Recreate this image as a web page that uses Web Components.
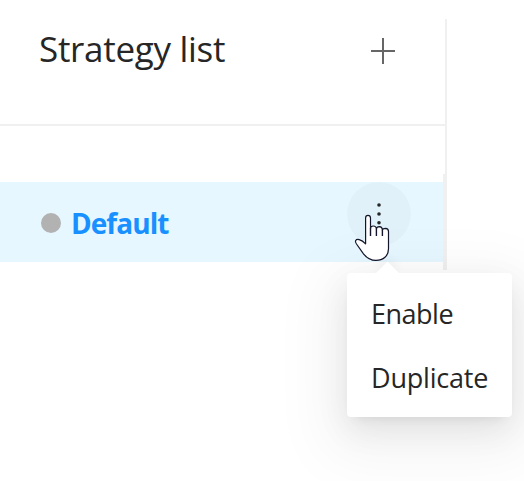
<!DOCTYPE html>
<html lang="en">
<head>
<meta charset="utf-8">
<title>Strategy list</title>
<style>
body{margin:0;width:524px;height:481px;overflow:hidden;background:#fff;color:#262626;font-family:"Open Sans","Noto Sans",sans-serif;font-weight:370}
</style>
</head>
<body>
<strategy-panel>
  <panel-header slot="header">Strategy list</panel-header>
  <strategy-row>Default
    <action-menu slot="menu">
      <menu-item style="--ls:-.5px">Enable</menu-item>
      <menu-item>Duplicate</menu-item>
    </action-menu>
  </strategy-row>
</strategy-panel>
<script>
const define = (name, html) => customElements.define(name, class extends HTMLElement {
  constructor() {
    super();
    this.attachShadow({ mode: 'open' }).innerHTML = html;
  }
});

define('strategy-panel', `
<style>
:host{display:flex;flex-direction:column;width:447px;padding-top:19px}
.top{box-sizing:border-box;height:155px;border-right:2px solid #f0f0f0}
.list{box-sizing:border-box;height:96px;padding:8px 0;border-right:4px solid #f0f0f0}
</style>
<div class="top"><slot name="header"></slot></div>
<div class="list"><slot></slot></div>`);

define('panel-header', `
<style>
:host{display:flex;justify-content:space-between;align-items:flex-start;box-sizing:border-box;height:107px;padding:0 50px 0 39px;border-bottom:2px solid #f0f0f0}
.title{font-size:35px;line-height:48px;padding-top:6px;letter-spacing:-.3px;white-space:nowrap}
svg{display:block;margin-top:19px}
</style>
<div class="title"><slot></slot></div>
<svg width="24" height="26" viewBox="0 0 24 26" shape-rendering="crispEdges"><path d="M11 0h2v26h-2zM0 12h24v2H0z" fill="#666"/></svg>`);

define('strategy-row', `
<style>
:host{position:relative;display:flex;align-items:center;box-sizing:border-box;height:80px;padding:0 32px 0 41px;background:#e6f7ff}
.dot{width:20px;height:20px;border-radius:50%;background:#b2b2b2;margin-top:2px}
.name{flex:1;margin-left:10px;font-size:28px;line-height:40px;font-weight:700;color:#1890ff;letter-spacing:-.95px;padding-top:2px}
.more{align-self:flex-start;display:grid;place-items:center;width:64px;height:64px;border-radius:50%;background:rgba(0,0,0,.022)}
.menu{position:absolute;left:347px;top:91px}
.cursor{position:absolute;left:350px;top:28px}
</style>
<span class="dot"></span>
<span class="name"><slot></slot></span>
<span class="more"><svg width="6" height="24" fill="#262626"><circle cx="3" cy="3" r="1.8"/><circle cx="3" cy="12" r="1.8"/><circle cx="3" cy="20.8" r="1.8"/></svg></span>
<div class="menu"><slot name="menu"></slot></div>
<svg class="cursor" width="44" height="54" viewBox="350 210 44 54"><path d="M365.6 243.8V218Q365.6 215.4 368 215.4T370.5 218V228.6Q370.6 226 373.3 226Q376.3 226 376.4 229Q376.7 226.7 379.4 226.7Q382.2 226.8 382.4 230Q382.8 228.4 385.5 228.4Q388.5 228.7 388.5 231.5V248.8C388.5 256 383.2 260.4 376 260.4C369.5 260.4 366.3 257.4 363.5 253.8L356.5 244Q355 241.7 355.7 240.5Q356.6 239 359.2 239.6Q362.5 240.6 365.6 243.8Z" fill="#fff" stroke="#14142a" stroke-width="1.2" stroke-linejoin="round"/><path d="M370.5 228V236M376.4 229V236M382.4 230V236" fill="none" stroke="#14142a" stroke-width="1.4"/></svg>`);

define('action-menu', `
<style>
:host{position:relative;display:flex;flex-direction:column;box-sizing:border-box;width:165px;height:144px;padding:8px 0;border-radius:4px;background:#fff;box-shadow:0 6px 12px -8px rgba(0,0,0,.12),0 12px 32px 0 rgba(0,0,0,.08),0 18px 60px 20px rgba(0,0,0,.05)}
.arrow{position:absolute;left:32px;top:-8px;width:17px;height:17px;transform:rotate(45deg);background:#fff;box-shadow:-4px -4px 10px rgba(0,0,0,.04);clip-path:polygon(-12px -12px,100% -12px,100% 0,0 100%,-12px 100%)}
</style>
<span class="arrow"></span><slot></slot>`);

define('menu-item', `
<style>
:host{display:flex;align-items:center;box-sizing:border-box;height:64px;padding:2px 0 0 24px;font-size:27px;line-height:40px;letter-spacing:var(--ls,-.2px);white-space:nowrap;position:relative}
</style>
<span><slot></slot></span>`);
</script>
</body>
</html>
